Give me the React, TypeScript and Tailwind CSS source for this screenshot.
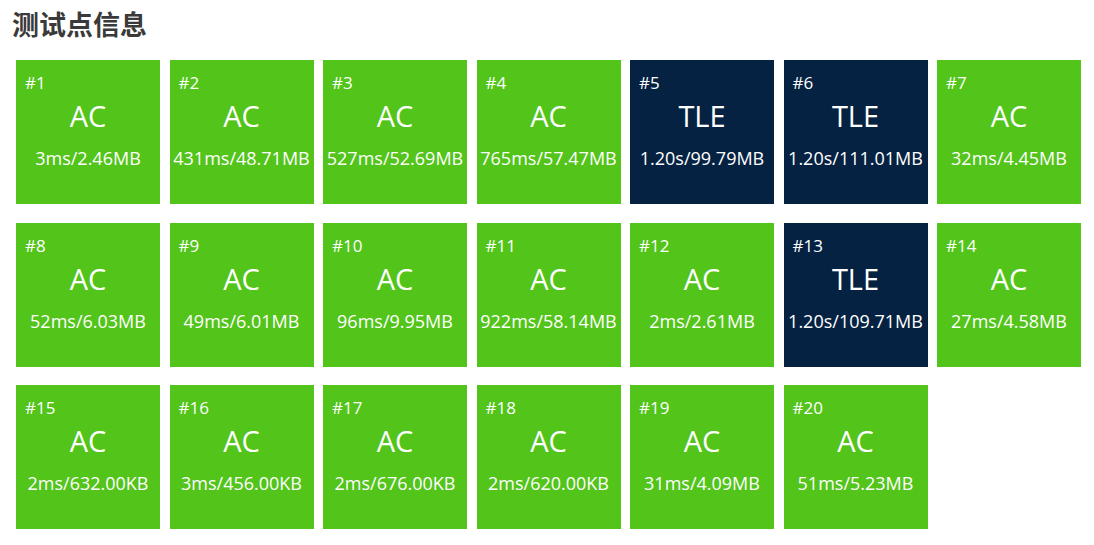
import React from 'react';

type Case = { id: number; status: 'AC' | 'TLE'; info: string };

const cases: Case[] = [
  { id: 1, status: 'AC', info: '3ms/2.46MB' },
  { id: 2, status: 'AC', info: '431ms/48.71MB' },
  { id: 3, status: 'AC', info: '527ms/52.69MB' },
  { id: 4, status: 'AC', info: '765ms/57.47MB' },
  { id: 5, status: 'TLE', info: '1.20s/99.79MB' },
  { id: 6, status: 'TLE', info: '1.20s/111.01MB' },
  { id: 7, status: 'AC', info: '32ms/4.45MB' },
  { id: 8, status: 'AC', info: '52ms/6.03MB' },
  { id: 9, status: 'AC', info: '49ms/6.01MB' },
  { id: 10, status: 'AC', info: '96ms/9.95MB' },
  { id: 11, status: 'AC', info: '922ms/58.14MB' },
  { id: 12, status: 'AC', info: '2ms/2.61MB' },
  { id: 13, status: 'TLE', info: '1.20s/109.71MB' },
  { id: 14, status: 'AC', info: '27ms/4.58MB' },
  { id: 15, status: 'AC', info: '2ms/632.00KB' },
  { id: 16, status: 'AC', info: '3ms/456.00KB' },
  { id: 17, status: 'AC', info: '2ms/676.00KB' },
  { id: 18, status: 'AC', info: '2ms/620.00KB' },
  { id: 19, status: 'AC', info: '31ms/4.09MB' },
  { id: 20, status: 'AC', info: '51ms/5.23MB' },
];

const CaseBox = ({ c }: { c: Case }) => (
  <div
    className={`w-[144px] h-[144px] text-white flex flex-col ${
      c.status === 'AC' ? 'bg-[#52c41a]' : 'bg-[#052242]'
    }`}
  >
    <div className="pl-[9px] pt-[11px] text-[17px] leading-[23px]">#{c.id}</div>
    <div className="text-center text-[29px] leading-[36px] mt-[4px]">{c.status}</div>
    <div className="text-center text-[18px] leading-[24px] mt-[12px] whitespace-nowrap">{c.info}</div>
  </div>
);

export default function App() {
  return (
    <div className="bg-white min-h-[545px] font-['Open_Sans','Noto_Sans_CJK_SC',sans-serif]">
      <h2 className="pl-[12px] pt-[8px] text-[27px] leading-[33px] font-bold text-[#3a3a3a]">
        测试点信息
      </h2>
      <div className="pl-[16px] mt-[19px] grid grid-cols-[repeat(7,144px)] gap-x-[9.5px] gap-y-[18.5px]">
        {cases.map((c) => (
          <CaseBox key={c.id} c={c} />
        ))}
      </div>
    </div>
  );
}
